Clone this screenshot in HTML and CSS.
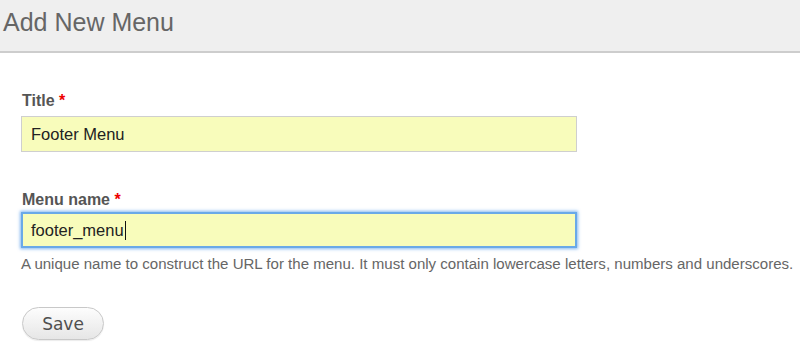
FILE: index.html
```html
<!DOCTYPE html>
<html lang="en">
<head>
    <meta charset="UTF-8">
    <meta name="viewport" content="width=device-width, initial-scale=1.0">
    <title>Add New Menu</title>
    <link rel="stylesheet" href="styles.css">
</head>
<body>
    <div class="page-header">
        <h1>Add New Menu</h1>
    </div>

    <form class="menu-form">
        <div class="form-item">
            <label for="title">Title <span class="required">*</span></label>
            <input type="text" id="title" class="form-text" value="Footer Menu">
        </div>

        <div class="form-item form-item-name">
            <label for="menu-name">Menu name <span class="required">*</span></label>
            <div class="form-text is-focused" id="menu-name">footer_menu<span class="caret"></span></div>
            <div class="description">A unique name to construct the URL for the menu. It must only contain lowercase letters, numbers and underscores.</div>
        </div>

        <button type="button" class="button">Save</button>
    </form>
</body>
</html>
```

FILE: styles.css
```css
* {
    margin: 0;
    padding: 0;
    box-sizing: border-box;
    font-family: 'Liberation Sans', Arial, Helvetica, sans-serif;
}

body {
    background: #fff;
    width: 800px;
    height: 346px;
    overflow: hidden;
}

.page-header {
    height: 53px;
    background: #efefef;
    border-bottom: 2px solid #cdcdcd;
    padding: 7px 0 0 3px;
}

h1 {
    font-size: 25px;
    line-height: 30px;
    font-weight: normal;
    color: #666;
}

.menu-form {
    padding: 0 0 0 21px;
}

.form-item label {
    display: block;
    margin: 39px 0 6px 1px;
    font-size: 16px;
    line-height: 18px;
    font-weight: bold;
    color: #555;
}

.form-item-name label {
    margin-top: 39px;
    margin-bottom: 3px;
}

.required {
    color: #e00;
}

.form-text {
    display: flex;
    align-items: center;
    width: 556px;
    height: 36px;
    padding: 0 9px;
    background: #f8fcbb;
    border: 1px solid #cfcfcf;
    font-size: 16.5px;
    color: #222;
}

.form-text:focus {
    outline: none;
}

.form-text.is-focused {
    border: 2px solid #6aa9e8;
    padding: 0 8px;
    box-shadow: 0 0 3px 1px rgba(92, 160, 235, 0.75);
}

.caret {
    display: inline-block;
    width: 1px;
    height: 19px;
    margin-left: 1px;
    background: #111;
}

.description {
    margin-top: 7px;
    font-size: 15.05px;
    line-height: 18px;
    color: #666;
}

.button {
    display: block;
    margin: 34px 0 0 1px;
    width: 82px;
    height: 33px;
    border: 1px solid #c8c8c8;
    border-radius: 17px;
    background: linear-gradient(#fdfdfd, #e6e6e6);
    box-shadow: 0 1px 1px rgba(0, 0, 0, 0.08);
    font-family: 'DejaVu Sans', sans-serif;
    font-size: 17px;
    color: #4f4f4f;
    cursor: pointer;
}
```
